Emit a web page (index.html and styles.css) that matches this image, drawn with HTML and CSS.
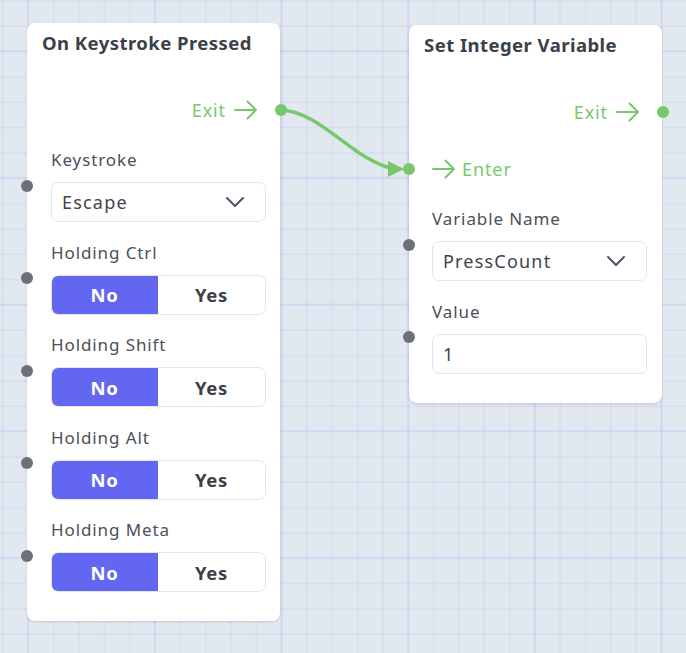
FILE: index.html
```html
<!DOCTYPE html>
<html lang="en">
<head>
<meta charset="utf-8">
<title>Flow editor</title>
<link rel="stylesheet" href="styles.css">
</head>
<body>
<div class="canvas">
  <svg class="wires" width="686" height="653" viewBox="0 0 686 653">
    <path d="M281 110 C 322 112, 352 160, 394 169" fill="none" stroke="#78c86b" stroke-width="3.5" stroke-linecap="round"/>
    <polygon points="388,161 404,169 388,177" fill="#78c86b"/>
  </svg>

  <div class="node node-a">
    <div class="node-title">On Keystroke Pressed</div>
    <div class="io">
      <div class="io-row out">
        <span>Exit</span>
        <svg class="arrow" width="24" height="20" viewBox="0 0 24 20"><path d="M1 10 H22 M13.5 1.5 L22 10 L13.5 18.5" fill="none" stroke="currentColor" stroke-width="2" stroke-linecap="round" stroke-linejoin="round"/></svg>
        <i class="port port-out"></i>
      </div>
    </div>
    <div class="fields">
      <div class="field">
        <i class="port port-in"></i>
        <div class="label">Keystroke</div>
        <div class="select"><span>Escape</span><svg class="chev" width="20" height="12" viewBox="0 0 20 12"><path d="M2 2 L10 10 L18 2" fill="none" stroke="currentColor" stroke-width="2" stroke-linecap="round" stroke-linejoin="round"/></svg></div>
      </div>
      <div class="field">
        <i class="port port-in"></i>
        <div class="label">Holding Ctrl</div>
        <div class="toggle"><span class="opt on">No</span><span class="opt">Yes</span></div>
      </div>
      <div class="field">
        <i class="port port-in"></i>
        <div class="label">Holding Shift</div>
        <div class="toggle"><span class="opt on">No</span><span class="opt">Yes</span></div>
      </div>
      <div class="field">
        <i class="port port-in"></i>
        <div class="label">Holding Alt</div>
        <div class="toggle"><span class="opt on">No</span><span class="opt">Yes</span></div>
      </div>
      <div class="field">
        <i class="port port-in"></i>
        <div class="label">Holding Meta</div>
        <div class="toggle"><span class="opt on">No</span><span class="opt">Yes</span></div>
      </div>
    </div>
  </div>

  <div class="node node-b">
    <div class="node-title">Set Integer Variable</div>
    <div class="io">
      <div class="io-row out">
        <span>Exit</span>
        <svg class="arrow" width="24" height="20" viewBox="0 0 24 20"><path d="M1 10 H22 M13.5 1.5 L22 10 L13.5 18.5" fill="none" stroke="currentColor" stroke-width="2" stroke-linecap="round" stroke-linejoin="round"/></svg>
        <i class="port port-out"></i>
      </div>
      <div class="io-row in">
        <i class="port port-enter"></i>
        <svg class="arrow" width="24" height="20" viewBox="0 0 24 20"><path d="M1 10 H22 M13.5 1.5 L22 10 L13.5 18.5" fill="none" stroke="currentColor" stroke-width="2" stroke-linecap="round" stroke-linejoin="round"/></svg>
        <span>Enter</span>
      </div>
    </div>
    <div class="fields">
      <div class="field">
        <i class="port port-in"></i>
        <div class="label">Variable Name</div>
        <div class="select"><span>PressCount</span><svg class="chev" width="20" height="12" viewBox="0 0 20 12"><path d="M2 2 L10 10 L18 2" fill="none" stroke="currentColor" stroke-width="2" stroke-linecap="round" stroke-linejoin="round"/></svg></div>
      </div>
      <div class="field">
        <i class="port port-in"></i>
        <div class="label">Value</div>
        <div class="input">1</div>
      </div>
    </div>
  </div>
</div>
</body>
</html>
```

FILE: styles.css
```css
html, body {
  margin: 0;
  padding: 0;
}
body {
  font-family: "Noto Sans", "DejaVu Sans", sans-serif;
  color: #374151;
}
.canvas {
  position: relative;
  width: 686px;
  height: 653px;
  overflow: hidden;
  background-color: #e2e8f0;
  background-image:
    linear-gradient(to right, rgba(99, 102, 241, 0.07) 2px, transparent 2px),
    linear-gradient(to bottom, rgba(99, 102, 241, 0.07) 2px, transparent 2px),
    linear-gradient(to right, rgba(99, 102, 241, 0.07) 1.5px, transparent 1.5px),
    linear-gradient(to bottom, rgba(99, 102, 241, 0.07) 1.5px, transparent 1.5px);
  background-size: 126.67px 126.67px, 126.67px 126.67px, 25.33px 25.33px, 25.33px 25.33px;
  background-position: 27px 50px, 27px 50px, 27.5px 0px, 27.5px 0px;
}
.wires {
  position: absolute;
  left: 0;
  top: 0;
  z-index: 2;
  pointer-events: none;
}
.node {
  position: absolute;
  width: 253px;
  background: #ffffff;
  border-radius: 8px;
  box-shadow: 0 1px 3px rgba(15, 23, 42, 0.10), 0 1px 2px rgba(15, 23, 42, 0.06);
  padding-bottom: 29px;
}
.node-a { left: 27px; top: 23px; }
.node-b { left: 409px; top: 25px; padding-bottom: 29px; }

.node-title {
  padding: 8px 15px 0;
  font-size: 18.5px;
  line-height: 24px;
  font-weight: 700;
  letter-spacing: 0.45px;
  color: #3b4049;
}
.io {
  margin-top: 26px;
  display: flex;
  flex-direction: column;
}
.io-row {
  position: relative;
  height: 57px;
  display: flex;
  align-items: center;
  gap: 8px;
  color: #78c86b;
  font-size: 18px;
  letter-spacing: 0.9px;
}
.io-row.out {
  justify-content: flex-end;
  padding-right: 22px;
}
.io-row.in {
  justify-content: flex-start;
  padding-left: 23px;
  gap: 6px;
}
.arrow { display: block; }

.port {
  position: absolute;
  width: 12px;
  height: 12px;
  border-radius: 50%;
  top: 50%;
  margin-top: -6px;
}
.port-out {
  right: -7px;
  background: #78c86b;
}
.port-enter {
  left: -6px;
  background: #78c86b;
  z-index: 3;
}
.port-in {
  left: -30px;
  background: #6b7178;
}

.fields {
  margin-top: 11px;
  padding: 0 14px 0 24px;
  display: flex;
  flex-direction: column;
  gap: 19.5px;
}
.node-b .fields { padding: 0 15px 0 23px; }
.node-b .port-in { left: -29px; }

.field {
  position: relative;
  display: flex;
  flex-direction: column;
  gap: 11px;
}
.label {
  font-size: 17px;
  line-height: 22px;
  letter-spacing: 0.9px;
  color: #4b5058;
}
.select, .input, .toggle {
  height: 40px;
  box-sizing: border-box;
  border: 1px solid #e4e6ea;
  border-radius: 7px;
  font-size: 18px;
  letter-spacing: 1.2px;
  color: #3f444c;
}
.select, .input {
  display: flex;
  align-items: center;
  padding: 0 20px 0 10px;
}
.select {
  justify-content: space-between;
}
.chev { color: #4b5563; display: block; }

.toggle {
  display: flex;
  overflow: hidden;
}
.opt {
  flex: 1;
  display: flex;
  align-items: center;
  justify-content: center;
  font-weight: 700;
  font-size: 18.5px;
  letter-spacing: 0.6px;
  color: #3b4049;
}
.opt.on {
  background: #6366f1;
  color: #ffffff;
  margin: -1px 0 -1px -1px;
}
```
